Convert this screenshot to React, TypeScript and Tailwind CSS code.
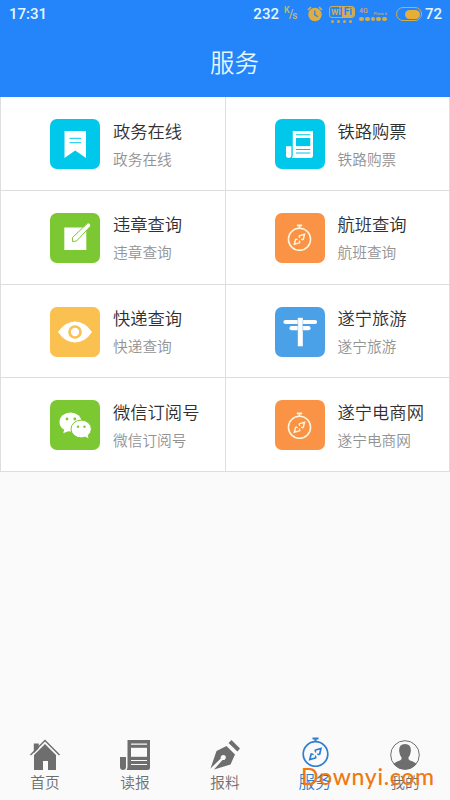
import React from "react";

type IconProps = { className?: string };

const Bookmark: React.FC<IconProps> = ({ className }) => (
  <svg viewBox="0 0 50 50" className={className}>
    <path d="M14.5 12H36v27L25.2 31.5 14.5 39z" fill="#fff" />
    <path d="M19.5 19.3h11.5M19.5 23.7h11.5" stroke="#00c8ea" strokeWidth="1" />
  </svg>
);

const Newspaper: React.FC<IconProps & { color: string; hole: string }> = ({
  className,
  color,
  hole,
}) => (
  <svg viewBox="0 0 30 30" className={className}>
    <path d="M7.5 0H30v27.5q0 2.5-2.5 2.5H6.5Q7.5 28.500 7.500 27V0z" fill={color} />
    <path d="M0 17h6v10q0 3-3 3t-3-3z" fill={color} />
    <path d="M11 7.800h16v9H11z" fill={hole} />
    <path
      d="M11 4.200h16M11 20.500h16M11 24.500h16"
      stroke={hole}
      strokeWidth="1.200"
    />
  </svg>
);

const Edit: React.FC<IconProps> = ({ className }) => (
  <svg viewBox="0 0 50 50" className={className}>
    <path d="M14.300 14.500h22V37h-22z" fill="#fff" />
    <path
      d="M22.500 28.500v-4L37.500 10.200q1.200-.8 2.500.4t.5 2.600L26.500 28z"
      fill="#fff"
      stroke="#7cc833"
      strokeWidth="1"
    />
  </svg>
);

const Compass: React.FC<IconProps> = ({ className }) => (
  <svg
    viewBox="0 0 27 30"
    fill="none"
    stroke="currentColor"
    className={className}
  >
    <circle cx="13.500" cy="17" r="12.300" strokeWidth="1.700" />
    <path d="M10.500 1.500h6M13.500 1.500v3.500" strokeWidth="2" />
    <path
      d="M12.800 13.200l6.200-1.700-1.500 6.300M9.300 16.500l-1.500 6 6.400-1.800"
      strokeWidth="1.700"
    />
    <path
      d="M12.800 13.200l1 2.300M17.500 17.800l-2.300-1M9.300 16.500l2.300 1.100M14.200 20.700l-1-2.300"
      strokeWidth="1.300"
    />
  </svg>
);

const Eye: React.FC<IconProps> = ({ className }) => (
  <svg viewBox="0 0 50 50" className={className}>
    <path d="M8 25Q15 14.500 25 14.500T42 25Q35 35.500 25 35.500T8 25z" fill="#fff" />
    <circle
      cx="25"
      cy="25"
      r="5.500"
      fill="#fff"
      stroke="#fac050"
      strokeWidth="2.600"
    />
  </svg>
);

const Signpost: React.FC<IconProps> = ({ className }) => (
  <svg viewBox="0 0 50 50" className={className}>
    <path
      d="M10.500 15h29.500M16.500 21.200h17"
      stroke="#fff"
      strokeWidth="4.200"
      strokeLinecap="round"
    />
    <path d="M22.800 10.800h5v28.500h-5z" fill="#fff" />
    <path d="M22.800 13v11M27.800 13v11" stroke="#4aa1e8" strokeWidth=".4" />
  </svg>
);

const Wechat: React.FC<IconProps> = ({ className }) => (
  <svg viewBox="0 0 50 50" fill="#fff" className={className}>
    <ellipse cx="20.500" cy="22" rx="11" ry="9.600" />
    <path d="M14.500 28l-1.200 5.300 6-2.500z" />
    <ellipse
      cx="31.200"
      cy="29"
      rx="10.200"
      ry="8.900"
      stroke="#7cc833"
      strokeWidth="1"
    />
    <path d="M35 36.300l3.500 2.200-1.200-5z" />
    <g fill="#7cc833">
      <circle cx="17" cy="19" r="1.400" />
      <circle cx="24.800" cy="19" r="1.400" />
      <circle cx="28" cy="26.800" r="1.200" />
      <circle cx="34.500" cy="26.800" r="1.200" />
    </g>
  </svg>
);

const House: React.FC<IconProps> = ({ className }) => (
  <svg viewBox="0 0 30 31" className={className}>
    <path
      d="M3.800 4.500h5v4.800l-5 5zM4 16L15 5l11 11v15h-8v-9h-5v9H4z"
      fill="#6e6e6e"
    />
    <path d="M.5 16L15 1.500 29.500 16" fill="none" stroke="#6e6e6e" strokeWidth="1.500" />
  </svg>
);

const Pen: React.FC<IconProps> = ({ className }) => (
  <svg viewBox="0 0 30 30" fill="#6e6e6e" className={className}>
    <path d="M18.500 3l3-3L30 8.500l-2.600 3z" />
    <path d="M16.500 6L25 14.500 20.500 24.500 4 29.500l8.500-9.500a2.600 2.600 0 1 0-1.700-1.600L.5 28.500 6.500 11z" />
  </svg>
);

const Person: React.FC<IconProps> = ({ className }) => (
  <svg viewBox="0 0 30 30" className={className}>
    <circle cx="15" cy="15" r="14.300" fill="#fafafa" stroke="#6e6e6e" />
    <path
      d="M3.500 24q1.500-2 6.500-3.500 2-.8 1.500-3Q9.700 15.500 9.200 11.500 8.500 4 15 4t5.800 7.500q-.5 4-2.300 6-.5 2.200 1.500 3 5 1.500 6.500 3.500Q22 29.500 15 29.500T3.500 24z"
      fill="#6e6e6e"
    />
  </svg>
);

const services = [
  { name: "政务在线", tile: "bg-[#00c8ea]", icon: <Bookmark className="size-[50px]" /> },
  {
    name: "铁路购票",
    tile: "bg-[#00c8ea]",
    icon: <Newspaper color="#fff" hole="#00c8ea" className="size-[27px]" />,
  },
  { name: "违章查询", tile: "bg-[#7cc833]", icon: <Edit className="size-[50px]" /> },
  {
    name: "航班查询",
    tile: "bg-[#fa9345]",
    icon: <Compass className="h-[27px] w-[25px] text-[#fff4dc]" />,
  },
  { name: "快递查询", tile: "bg-[#fac050]", icon: <Eye className="size-[50px]" /> },
  { name: "遂宁旅游", tile: "bg-[#4aa1e8]", icon: <Signpost className="size-[50px]" /> },
  { name: "微信订阅号", tile: "bg-[#7cc833]", icon: <Wechat className="size-[50px]" /> },
  {
    name: "遂宁电商网",
    tile: "bg-[#fa9345]",
    icon: <Compass className="h-[27px] w-[25px] text-[#fff4dc]" />,
  },
];

const tabs = [
  { label: "首页", icon: <House className="h-[31px] w-[30px]" /> },
  {
    label: "读报",
    icon: <Newspaper color="#6e6e6e" hole="#fafafa" className="size-[30px]" />,
  },
  { label: "报料", icon: <Pen className="size-[30px]" /> },
  {
    label: "服务",
    icon: <Compass className="mb-[3px] h-[30px] w-[27px] text-[#2d7dd2]" />,
    active: true,
  },
  { label: "我的", icon: <Person className="size-[30px]" /> },
];

const StatusBar: React.FC = () => (
  <div className="flex h-7 items-center justify-between pr-2 pl-[9px] font-['Roboto',sans-serif] text-[15px] leading-7 font-medium text-[#e4f6ff]">
    <span>17:31</span>
    <div className="flex items-center">
      <span>232</span>
      {/* network speed unit */}
      <span className="ml-[5px] flex w-[13px] items-center text-[9px] leading-none text-[#c5b97a]">
        <span className="-mt-[7px]">K</span>
        <span className="-ml-px text-[12px]">/</span>
        <span className="-ml-px mt-[4px] text-[10px]">s</span>
      </span>
      <svg viewBox="0 0 16 16" className="ml-[10px] size-4">
        <circle cx="8" cy="8.500" r="6.700" fill="#dfae42" />
        <path d="M1 4l3-3M12 1l3 3" stroke="#dfae42" strokeWidth="1.700" />
        <path d="M7.800 4.500v4.300l3 2" fill="none" stroke="#2484f9" strokeWidth="1.300" />
      </svg>
      <div className="ml-[6px] flex w-[26px] flex-col items-center">
        <div className="flex h-[12px] w-[26px] items-center overflow-hidden rounded-[3px] border border-[#c9ac5c] text-[10px] leading-none font-bold">
          <span className="w-[12px] text-center text-[#c9ac5c]">wi</span>
          <span className="w-[12px] bg-[#d3ac4c] text-center text-[#2484f9]">Fi</span>
        </div>
        <div className="mt-[2px] flex gap-[3px]">
          {[0, 1, 2, 3].map((dot) => (
            <i key={dot} className="size-[3px] rounded-full bg-[#c9ac5c]" />
          ))}
        </div>
      </div>
      <div className="ml-[4px] flex w-[28px] flex-col">
        <div className="flex h-[9px] justify-between text-[#c9ac5c]">
          <span className="text-[7px] leading-[8px]">4G</span>
          <span className="mt-[4px] text-[4px] leading-[5px]">Plane 6</span>
        </div>
        <div className="mt-px flex gap-[1px]">
          {[0, 1, 2, 3, 4].map((dot) => (
            <i key={dot} className="size-[4.800px] rounded-full bg-[#d3ac4c]" />
          ))}
        </div>
      </div>
      <div className="ml-[9px] flex h-[14px] w-[26px] items-center justify-end rounded-full border-[1.500px] border-[#d3ac4c] pr-[1px]">
        <i className="h-[9px] w-[15px] rounded-full bg-[#e4ae37]" />
      </div>
      <span className="ml-[3px]">72</span>
    </div>
  </div>
);

const App: React.FC = () => {
  return (
    <div className="relative flex h-[800px] w-[450px] flex-col overflow-hidden bg-[#fafafa] font-['Noto_Sans_CJK_SC',sans-serif] font-[350]">
      <header className="h-[97px] bg-[#2484f9]">
        <StatusBar />
        <h1 className="mt-[16px] pl-[19px] text-center text-[24.500px] leading-[36px] text-[#e4f6ff]">
          服务
        </h1>
      </header>

      <main className="grid grid-cols-2 border-l border-[#dedede]">
        {services.map((service) => (
          <div
            key={service.name}
            className="flex h-[93.750px] items-center border-r border-b border-[#dedede] bg-white pt-[1.500px] pl-[49px]"
          >
            <div
              className={`flex size-[50px] shrink-0 items-center justify-center rounded-[7px] ${service.tile}`}
            >
              {service.icon}
            </div>
            <div className="ml-[13px] pt-[1px] whitespace-nowrap">
              <p className="text-[17.300px] leading-[28px] text-[#303030]">
                {service.name}
              </p>
              <p className="text-[14.700px] leading-[28px] text-[#929292]">
                {service.name}
              </p>
            </div>
          </div>
        ))}
      </main>

      <nav className="mt-auto grid h-[64px] grid-cols-5">
        {tabs.map((tab) => (
          <div key={tab.label} className="flex flex-col items-center">
            <div className="flex h-[34px] items-end">{tab.icon}</div>
            <span
              className={
                tab.active
                  ? "text-[16.500px] leading-[22px] text-[#2d7dd2]"
                  : "text-[14.700px] leading-[23px] text-[#6e6e6e]"
              }
            >
              {tab.label}
            </span>
          </div>
        ))}
      </nav>

      <span className="absolute top-[762px] left-[301px] font-['Lato',sans-serif] text-[23px] leading-[28px] font-medium tracking-[0.700px] text-[#f0780e]">
        Downyi.com
      </span>
    </div>
  );
};

export default App;
